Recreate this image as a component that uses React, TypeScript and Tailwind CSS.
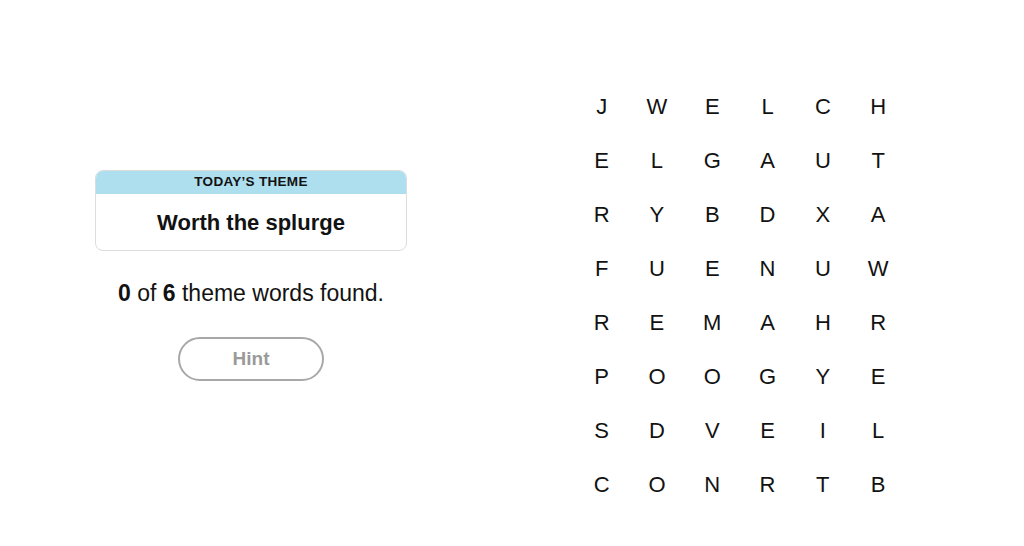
const grid = [
  "JWELCH",
  "ELGAUT",
  "RYBDXA",
  "FUENUW",
  "REMAHR",
  "POOGYE",
  "SDVEIL",
  "CONRTB",
];

export default function App() {
  return (
    <div
      className="flex w-[1024px] h-[546px] bg-white text-[#121212]"
      style={{ fontFamily: '"Liberation Sans", Arial, sans-serif' }}
    >
      <div className="w-[502px] flex flex-col items-center pt-[170px]">
        <div className="w-[312px] rounded-lg border border-[#dcdcdc] overflow-hidden">
          <div className="h-[23px] bg-[#aedfee] flex items-center justify-center text-[13.5px] font-bold tracking-[0.3px]">
            TODAY’S THEME
          </div>
          <div className="h-[56px] flex items-center justify-center text-[22px] font-bold">
            Worth the splurge
          </div>
        </div>
        <p className="mt-[29px] text-[23px] leading-[26px]">
          <span className="font-bold">0</span> of <span className="font-bold">6</span> theme words found.
        </p>
        <button className="mt-[31px] w-[146px] h-[44px] rounded-full border-2 border-[#a8a8a8] text-[#9a9a9a] text-[19px] font-bold flex items-center justify-center">
          Hint
        </button>
      </div>
      <div className="ml-[72px] pt-[80px]">
        <div className="grid grid-cols-[repeat(6,55.3px)] auto-rows-[53.9px]">
          {grid.flatMap((row, r) =>
            row.split("").map((ch, c) => (
              <div key={`${r}-${c}`} className="flex items-center justify-center text-[22px]">
                {ch}
              </div>
            ))
          )}
        </div>
      </div>
    </div>
  );
}
